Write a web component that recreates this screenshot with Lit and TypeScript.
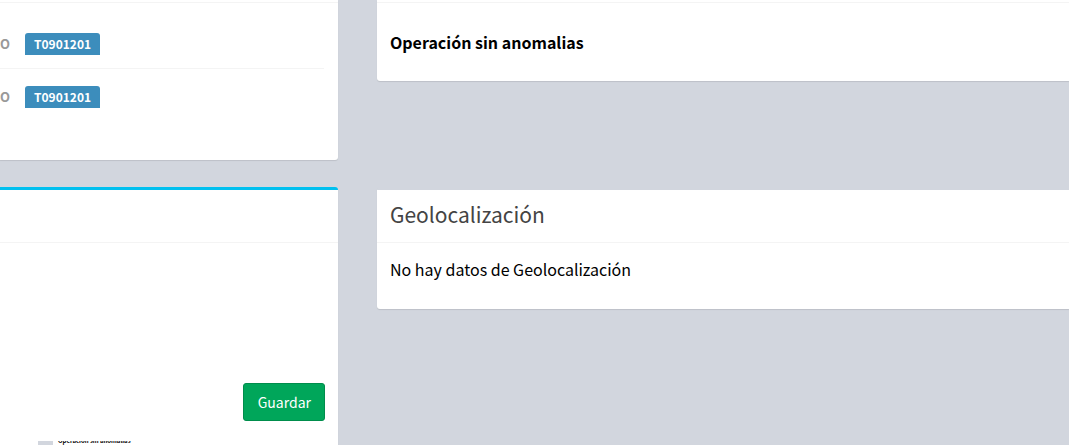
import { LitElement, html, css } from "lit";
import { customElement, property } from "lit/decorators.js";

@customElement("panel-box")
class PanelBox extends LitElement {
  @property() heading = "";
  @property({ reflect: true }) tone = "plain";

  static styles = css`
    :host {
      display: block;
      box-sizing: border-box;
      background: #fff;
      border-top: 3px solid #d2d6de;
      border-radius: 3px;
      box-shadow: 0 1px 1px rgba(0, 0, 0, 0.1);
    }
    :host([tone="info"]) {
      border-top-color: #00c0ef;
    }
    :host([tone="cut"]) {
      border-top: 0;
      border-top-left-radius: 0;
      border-top-right-radius: 0;
    }
    .header {
      box-sizing: border-box;
      height: 53px;
      padding: 0 13px;
      border-bottom: 1px solid #f4f4f4;
    }
    :host([tone="cut"]) .header {
      height: 3px;
    }
    .title {
      margin: 0;
      font-size: 21px;
      font-weight: 400;
      line-height: 48px;
      color: #444;
    }
  `;

  render() {
    return html`
      <header class="header">
        ${this.heading ? html`<h3 class="title">${this.heading}</h3>` : null}
      </header>
      <slot></slot>
    `;
  }
}

@customElement("app-root")
class AppRoot extends LitElement {
  static styles = css`
    :host {
      display: block;
      height: 100vh;
      overflow: hidden;
      background: #d2d6de;
      color: #000;
      font-family: "Noto Sans CJK SC", "Noto Sans", sans-serif;
      font-size: 16px;
      line-height: 24px;
    }
    .page {
      display: grid;
      grid-template-columns: 338px minmax(0, 1fr);
      column-gap: 39px;
    }
    .column {
      display: flex;
      flex-direction: column;
    }
    .left {
      gap: 27px;
    }
    .right {
      gap: 106px;
    }
    .left panel-box {
      border-top-left-radius: 0;
      border-bottom-left-radius: 0;
    }
    .right panel-box {
      border-top-right-radius: 0;
      border-bottom-right-radius: 0;
    }
    .rows {
      padding: 15px 14px 37px 0;
    }
    .row {
      display: flex;
      align-items: center;
      gap: 15px;
      box-sizing: border-box;
      height: 50px;
      margin: 0;
      padding-top: 2px;
    }
    .row + .row {
      height: 55px;
      border-top: 1px solid #f4f4f4;
    }
    .term {
      margin: 0;
      font-size: 13px;
      font-weight: 700;
      color: #999;
    }
    .value {
      display: flex;
      margin: 0;
    }
    .badge {
      padding: 0 9px;
      border-radius: 3px 3px 0 0;
      background: #3c8dbc;
      color: #fff;
      font-size: 12px;
      font-weight: 700;
      line-height: 22px;
    }
    .message {
      margin: 0;
      padding: 14px 13px 28px;
    }
    .strong {
      padding: 27px 13px;
      font-weight: 700;
    }
    .form {
      display: flex;
      justify-content: flex-end;
      padding: 140px 13px 20px;
    }
    .save {
      padding: 6px 13px 6px 14px;
      border: 1px solid #008d4c;
      border-radius: 3px;
      background: #00a65a;
      color: #fff;
      font: inherit;
      font-size: 14px;
      line-height: 24px;
    }
    .preview {
      display: flex;
      gap: 5px;
      height: 40px;
      margin: 0;
      padding-left: 38px;
      overflow: hidden;
    }
    .swatch {
      width: 15px;
      background: #d2d6de;
    }
    .caption {
      font-size: 6px;
      font-weight: 700;
      line-height: 0;
    }
  `;

  render() {
    return html`
      <main class="page">
        <div class="column left">
          <panel-box tone="cut">
            <div class="rows">
              ${["T0901201", "T0901201"].map(
                (code) => html`
                  <dl class="row">
                    <dt class="term">O</dt>
                    <dd class="value"><span class="badge">${code}</span></dd>
                  </dl>
                `
              )}
            </div>
          </panel-box>
          <panel-box tone="info">
            <form class="form">
              <button class="save" type="button">Guardar</button>
            </form>
            <figure class="preview">
              <span class="swatch"></span>
              <figcaption class="caption">Operación sin anomalias</figcaption>
            </figure>
          </panel-box>
        </div>
        <div class="column right">
          <panel-box tone="cut">
            <p class="message strong">Operación sin anomalias</p>
          </panel-box>
          <panel-box heading="Geolocalización">
            <p class="message">No hay datos de Geolocalización</p>
          </panel-box>
        </div>
      </main>
    `;
  }
}
